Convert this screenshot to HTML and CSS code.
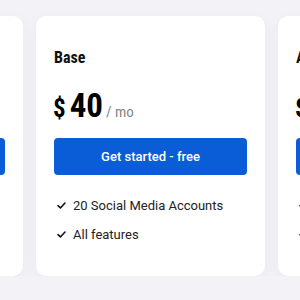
FILE: index.html
```html
<!DOCTYPE html>
<html>
<head>
<meta charset="utf-8">
<link rel="stylesheet" href="styles.css">
</head>
<body>
<div class="row">
  <div class="card">
    <h3 class="plan">Free</h3>
    <div class="price"><span class="cur">$</span><span class="amt">0</span><span class="per">/ mo</span></div>
    <a class="btn">Get started - free</a>
    <ul class="features">
      <li><svg class="chk" viewBox="0 0 10 8"><path d="M1 4.2 L3.8 6.8 L9 1.2"/></svg>5 Social Media Accounts</li>
      <li><svg class="chk" viewBox="0 0 10 8"><path d="M1 4.2 L3.8 6.8 L9 1.2"/></svg>All features</li>
    </ul>
  </div>
  <div class="card">
    <h3 class="plan">Base</h3>
    <div class="price"><span class="cur">$</span><span class="amt">40</span><span class="per">/ mo</span></div>
    <a class="btn">Get started - free</a>
    <ul class="features">
      <li><svg class="chk" viewBox="0 0 10 8"><path d="M1 4.2 L3.8 6.8 L9 1.2"/></svg>20 Social Media Accounts</li>
      <li><svg class="chk" viewBox="0 0 10 8"><path d="M1 4.2 L3.8 6.8 L9 1.2"/></svg>All features</li>
    </ul>
  </div>
  <div class="card">
    <h3 class="plan">Agency</h3>
    <div class="price"><span class="cur">$</span><span class="amt">99</span><span class="per">/ mo</span></div>
    <a class="btn">Get started - free</a>
    <ul class="features">
      <li><svg class="chk" viewBox="0 0 10 8"><path d="M1 4.2 L3.8 6.8 L9 1.2"/></svg>50 Social Media Accounts</li>
      <li><svg class="chk" viewBox="0 0 10 8"><path d="M1 4.2 L3.8 6.8 L9 1.2"/></svg>All features</li>
    </ul>
  </div>
</div>
</body>
</html>
```
FILE: styles.css
```css
html, body {
  margin: 0;
  padding: 0;
  background: #f3f3f7;
  overflow: hidden;
  font-family: Roboto, "Noto Sans", sans-serif;
}
.row {
  display: flex;
  gap: 13px;
  margin-left: -206px;
  padding-top: 16px;
}
.card {
  flex: 0 0 229px;
  box-sizing: border-box;
  background: #fff;
  border-radius: 10px;
  padding: 32px 18px 32px;
  box-shadow: 0 4px 14px rgba(20, 20, 60, 0.05);
}
.plan {
  margin: 0;
  font-family: "Roboto Condensed", Roboto, sans-serif;
  font-size: 16px;
  font-weight: 700;
  color: #111;
  line-height: 19px;
}
.price {
  display: flex;
  align-items: baseline;
  margin-top: 23px;
  font-family: "Roboto Condensed", Roboto, sans-serif;
  line-height: 32px;
  color: #000;
}
.cur {
  font-size: 25px;
  font-weight: 700;
  margin-right: 4px;
  margin-left: -1px;
}
.amt {
  font-size: 33px;
  font-weight: 700;
  margin-right: 3px;
}
.per {
  font-size: 15px;
  font-weight: 400;
  color: #858585;
}
.btn {
  display: flex;
  align-items: center;
  justify-content: center;
  height: 37px;
  margin-top: 10px;
  background: #0a5cd7;
  color: #fff;
  border-radius: 4px;
  font-size: 13px;
  font-weight: 500;
}
.features {
  list-style: none;
  margin: 20px 0 0;
  padding: 0;
  display: flex;
  flex-direction: column;
  gap: 9px;
}
.features li {
  display: flex;
  align-items: center;
  height: 20px;
  font-size: 13px;
  color: #222;
}
.chk {
  width: 9px;
  height: 7px;
  margin: 0 7px 0 3px;
  fill: none;
  stroke: #111;
  stroke-width: 1.8;
  stroke-linecap: round;
  stroke-linejoin: round;
}
```
